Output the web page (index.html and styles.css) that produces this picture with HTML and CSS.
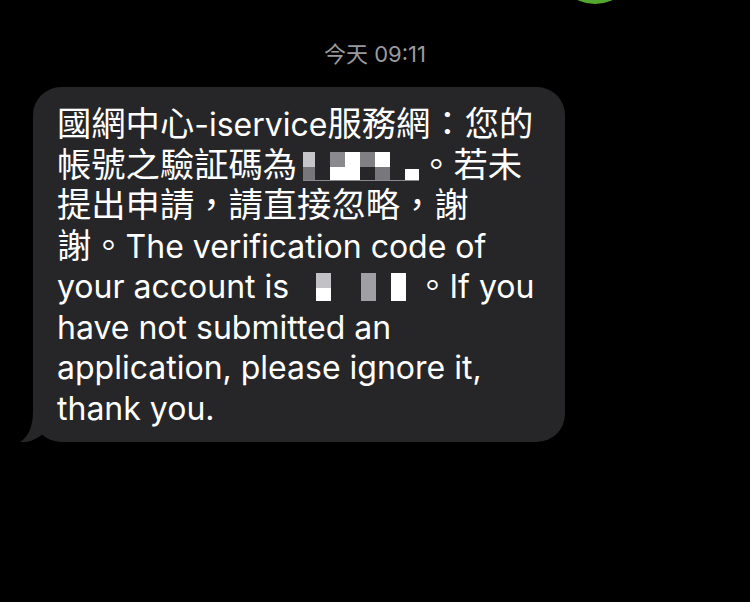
FILE: index.html
```html
<!DOCTYPE html>
<html lang="zh-Hant">
<head>
<meta charset="utf-8">
<link rel="stylesheet" href="styles.css">
</head>
<body>
<div class="screen">
  <div class="avatar-dot"></div>
  <div class="time"><span class="zh">今天</span> 09:11</div>
  <div class="thread">
    <div class="bubble">
      <p class="msg"><span class="zh">國網中心</span>-iservice<span class="zh">服務網：您的</span><br><span class="zh">帳號之驗証碼為</span><span class="redact r1"><i class="c a1"></i><i class="c gap"></i><i class="c a2"></i><i class="c a3"></i><i class="c a4"></i><i class="c a5"></i><i class="c gap"></i><i class="c a6"></i></span><span class="zh">。若未</span><br><span class="zh">提出申請，請直接忽略，謝</span><br><span class="zh">謝。</span>The verification code of<br>your account is<span class="redact r2"><i class="c b1"></i><i class="c gap2"></i><i class="c b2"></i><i class="c gap"></i><i class="c b3"></i></span><span class="zh">。</span>If you<br>have not submitted an<br>application, please ignore it,<br>thank you.</p>
      <svg class="tail" width="30" height="40" viewBox="0 0 30 40"><path d="M13,0 L13,8 C13,24 8,34 0,39 C9,40 17,36 24,30 L24,0 Z" fill="#262628"/></svg>
    </div>
  </div>
</div>
</body>
</html>
```
FILE: styles.css
```css
html, body {
  margin: 0;
  padding: 0;
  background: #000;
}
.screen {
  position: relative;
  width: 750px;
  height: 602px;
  overflow: hidden;
  background: #000;
}
.avatar-dot {
  position: absolute;
  left: 555px;
  top: -76px;
  width: 80px;
  height: 80px;
  border-radius: 50%;
  background: #55a82f;
}
.time {
  padding-top: 41px;
  text-align: center;
  font-family: Inter, "Noto Sans CJK TC", sans-serif;
  font-size: 22px;
  line-height: 26px;
  color: #9a9a9f;
}
.thread {
  display: flex;
  padding-left: 33px;
  margin-top: 20px;
}
.bubble {
  position: relative;
  width: 532px;
  box-sizing: border-box;
  background: #262628;
  border-radius: 28px;
  padding: 18px 10px 13px 24px;
}
.msg {
  margin: 0;
  font-family: Inter, "Noto Sans CJK TC", sans-serif;
  font-size: 32px;
  line-height: 40.5px;
  color: #fff;
  white-space: nowrap;
}
.zh {
  font-family: Roboto, "Noto Sans CJK TC", sans-serif;
  font-size: 34.3px;
  line-height: 20px;
}
.time .zh {
  font-size: 22px;
  line-height: 20px;
}
.tail {
  position: absolute;
  left: -13px;
  bottom: -1px;
}
.redact {
  display: inline-flex;
  vertical-align: -3px;
}
.r1 {
  margin-left: 6px;
  height: 28px;
  border-bottom: 1px solid #8a8a8e;
}
.r2 {
  margin-left: 27px;
  margin-right: 9px;
  height: 28px;
}
.c {
  display: block;
  width: 15px;
  height: 100%;
}
.gap { width: 15px; }
.gap2 { width: 30px; }
.a1 { width: 12px; background: linear-gradient(#c6c6ca 0 54%, #77777b 54% 100%); }
.a2 { background: linear-gradient(#8a8a8e 0 54%, #fff 54% 100%); }
.a3 { background: #fff; }
.a4 { background: linear-gradient(#808084 0 54%, transparent 54% 100%); }
.a5 { background: linear-gradient(#fff 0 54%, #78787c 54% 100%); }
.a6 { width: 14px; background: linear-gradient(transparent 0 60%, #fff 60% 100%); }
.b1 { background: linear-gradient(#c2c2c6 0 54%, #fff 54% 100%); }
.b2 { background: #a0a0a4; }
.b3 { background: #fff; }
```
